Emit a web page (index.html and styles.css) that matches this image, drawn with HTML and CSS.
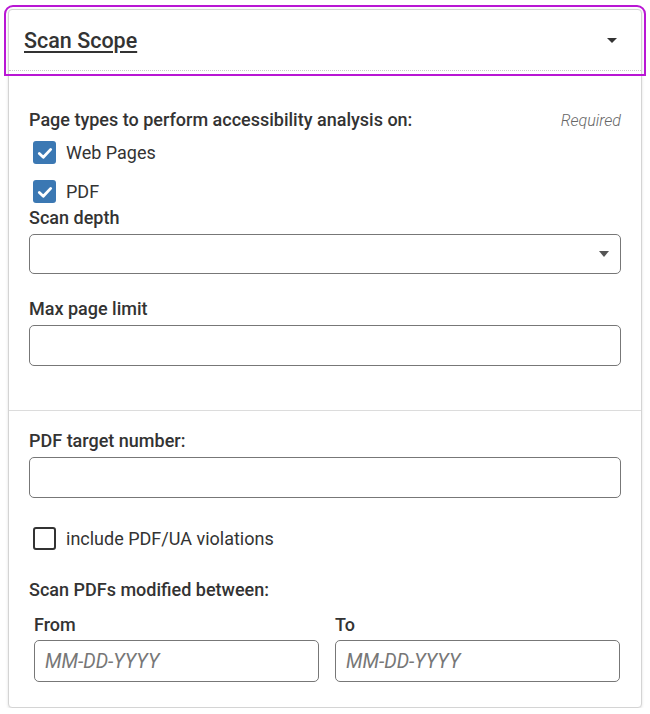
FILE: index.html
```html
<!DOCTYPE html>
<html lang="en">
<head>
<meta charset="utf-8">
<title>Scan Scope</title>
<link rel="stylesheet" href="styles.css">
</head>
<body>
<div class="card">
  <div class="card-header">
    <span class="title">Scan Scope</span>
    <span class="header-caret"></span>
  </div>
  <div class="section section-first">
    <div class="label-row">
      <span class="label">Page types to perform accessibility analysis on:</span>
      <span class="required">Required</span>
    </div>
    <div class="check-row first">
      <span class="box checked"><svg viewBox="0 0 22 22" width="22" height="22"><path d="M5.3 11.4 L9.3 15.2 L16.7 7.4" fill="none" stroke="#fff" stroke-width="2.8" stroke-linecap="round" stroke-linejoin="round"/></svg></span>
      <span class="check-label">Web Pages</span>
    </div>
    <div class="check-row second">
      <span class="box checked"><svg viewBox="0 0 22 22" width="22" height="22"><path d="M5.3 11.4 L9.3 15.2 L16.7 7.4" fill="none" stroke="#fff" stroke-width="2.8" stroke-linecap="round" stroke-linejoin="round"/></svg></span>
      <span class="check-label">PDF</span>
    </div>
    <div class="label depth-label">Scan depth</div>
    <div class="select"><span class="select-caret"></span></div>
    <div class="label max-label">Max page limit</div>
    <div class="field"></div>
  </div>
  <div class="section section-second">
    <div class="label">PDF target number:</div>
    <div class="field"></div>
    <div class="check-row ua">
      <span class="box"></span>
      <span class="check-label">include PDF/UA violations</span>
    </div>
    <div class="label between-label">Scan PDFs modified between:</div>
    <div class="dates">
      <div class="date-col">
        <div class="label">From</div>
        <div class="field date"><span class="placeholder">MM-DD-YYYY</span></div>
      </div>
      <div class="date-col">
        <div class="label">To</div>
        <div class="field date"><span class="placeholder">MM-DD-YYYY</span></div>
      </div>
    </div>
  </div>
</div>
</body>
</html>
```

FILE: styles.css
```css
* { box-sizing: border-box; }
html, body { margin: 0; padding: 0; background: #fff; }
body {
  font-family: Roboto, "Liberation Sans", Arial, sans-serif;
  color: #333;
}
.card {
  margin: 9px 8px 0 8px;
  border: 1px solid #d4d4d4;
  border-radius: 4px;
  box-shadow: 0 1px 3px rgba(0,0,0,0.12);
  background: #fff;
}
.card-header {
  height: 61px;
  display: flex;
  align-items: center;
  justify-content: space-between;
  padding: 0 24px 0 15px;
  border-bottom: 1px dotted #c8c8c8;
  border-radius: 4px 4px 0 0;
  outline: 2px solid #b916d4;
  outline-offset: 3px;
}
.title {
  font-size: 21.5px;
  font-weight: 500;
  text-decoration: underline;
  text-underline-offset: 3px;
  color: #333;
  margin-top: 1px;
}
.header-caret {
  width: 0; height: 0;
  border-left: 5.5px solid transparent;
  border-right: 5.5px solid transparent;
  border-top: 5.5px solid #333;
}
.section { padding: 0 20px; }
.section-first { padding-top: 37px; padding-bottom: 44px; }
.section-second { border-top: 1px solid #dcdcdc; padding-top: 18px; padding-bottom: 25px; }
.label {
  font-size: 18px;
  font-weight: 500;
  line-height: 24px;
  color: #333;
}
.label-row { display: flex; justify-content: space-between; align-items: baseline; height: 24px; }
.required {
  font-size: 16px;
  font-style: italic;
  font-weight: 300;
  color: #666;
  line-height: 24px;
}
.check-row {
  display: flex;
  align-items: center;
  gap: 10px;
  padding-left: 4px;
  height: 23px;
}
.check-row.first { margin-top: 9px; }
.check-row.second { margin-top: 16px; }
.check-row.ua { margin-top: 29px; }
.box {
  width: 23px; height: 23px;
  border-radius: 3px;
  border: 2px solid #333;
  display: flex; align-items: center; justify-content: center;
  flex: none;
}
.box.checked { background: #3b78b3; border: none; }
.box svg { display: block; }
.check-label { font-size: 18px; color: #333; line-height: 23px; }
.depth-label { margin-top: 3px; }
.select {
  margin-top: 4px;
  height: 40px;
  border: 1px solid #777;
  border-radius: 5px;
  display: flex; align-items: center; justify-content: flex-end;
  padding-right: 11px;
}
.select-caret {
  width: 0; height: 0;
  border-left: 5px solid transparent;
  border-right: 5px solid transparent;
  border-top: 6px solid #555;
}
.max-label { margin-top: 23px; }
.field {
  margin-top: 4px;
  height: 41px;
  border: 1px solid #777;
  border-radius: 5px;
  display: flex; align-items: center;
  padding-left: 10px;
}
.between-label { margin-top: 28px; }
.dates {
  margin: 11px 1px 0 5px;
  display: grid;
  grid-template-columns: 1fr 1fr;
  gap: 16px;
}
.field.date { height: 42px; margin-top: 3px; }
.placeholder {
  font-size: 19.5px;
  font-style: italic;
  color: #777;
}
```
